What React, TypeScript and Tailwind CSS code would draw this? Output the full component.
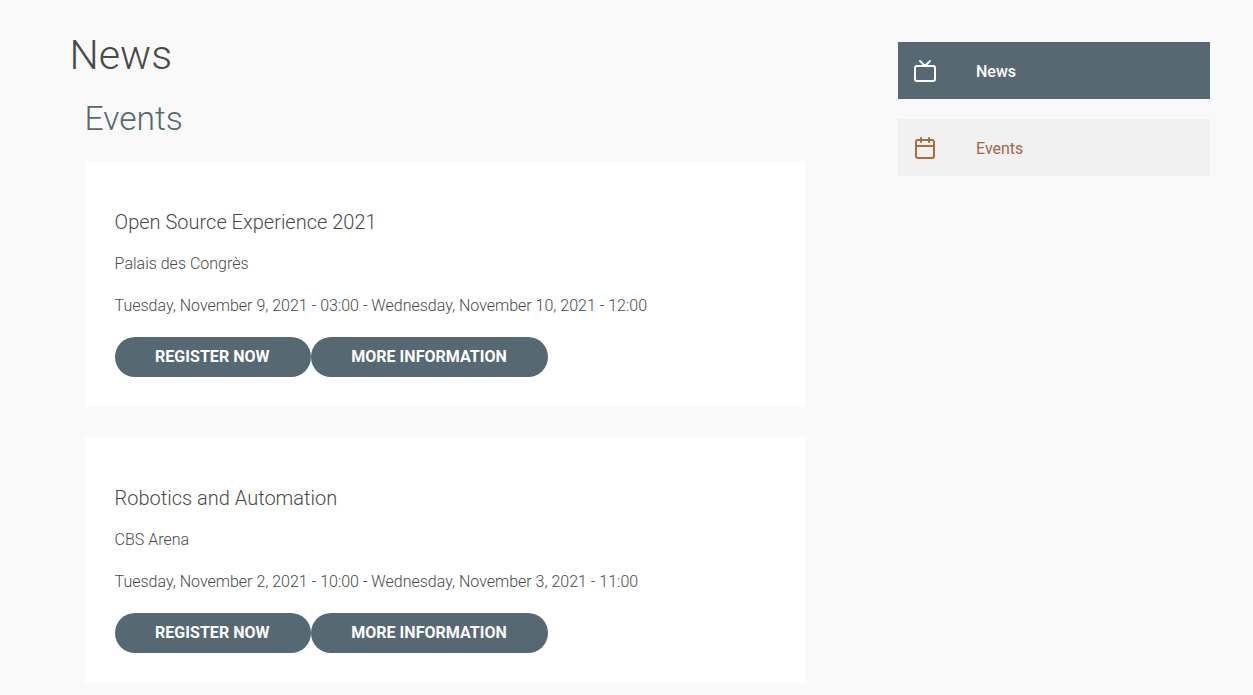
import { Calendar, Tv } from "lucide-react";

const events = [
  {
    title: "Open Source Experience 2021",
    location: "Palais des Congrès",
    date: "Tuesday, November 9, 2021 - 03:00 - Wednesday, November 10, 2021 - 12:00",
  },
  {
    title: "Robotics and Automation",
    location: "CBS Arena",
    date: "Tuesday, November 2, 2021 - 10:00 - Wednesday, November 3, 2021 - 11:00",
  },
];

function PillButton({ label }: { label: string }) {
  return (
    <button className="h-10 rounded-[20px] bg-[#566973] pl-10 pr-[41.5px] text-base font-bold leading-10 tracking-[0.04px] text-white">
      {label}
    </button>
  );
}

function EventCard({ title, location, date }: { title: string; location: string; date: string }) {
  return (
    <div className="mb-[30px] bg-white p-[30px] font-light text-[#4a4a4a]">
      <div className="-ml-[0.4px]">
        <h3 className="mt-[18px] text-xl leading-[26px]">{title}</h3>
        <p className="mt-[17px] text-base leading-6">{location}</p>
        <p className="mt-[18px] text-base leading-6">{date}</p>
      </div>
      <div className="mt-[19px] flex">
        <PillButton label="REGISTER NOW" />
        <PillButton label="MORE INFORMATION" />
      </div>
    </div>
  );
}

export default function App() {
  return (
    <div className="flex h-[695px] overflow-hidden bg-[#f9f9f9] font-['Roboto',sans-serif]">
      <main className="ml-[70px] w-[735px] shrink-0 pt-[30px]">
        <h1 className="-ml-[0.5px] text-[41.2px] font-light leading-[50px] text-[#4a4a4a]">News</h1>
        <section className="pl-[15px]">
          <h2 className="-ml-[0.4px] mt-[19px] text-[33.6px] font-light leading-10 text-[#566973]">Events</h2>
          <div className="mt-[22px]">
            {events.map((event) => (
              <EventCard key={event.title} {...event} />
            ))}
          </div>
        </section>
      </main>
      <aside className="ml-[93px] w-[312px] shrink-0 pt-[42px]">
        <a className="flex h-[57px] items-center bg-[#566973] pl-[15px] text-base font-medium text-white">
          <Tv className="mt-px h-6 w-6" strokeWidth={2} />
          <span className="ml-[39px] pt-0.5">News</span>
        </a>
        <a className="mt-5 flex h-[57px] items-center bg-[#f1f1f1] pl-[15px] text-base text-[#a0694a]">
          <Calendar className="mt-px h-6 w-6 text-[#ad6c38]" strokeWidth={2} />
          <span className="ml-[39px] pt-0.5">Events</span>
        </a>
      </aside>
    </div>
  );
}
